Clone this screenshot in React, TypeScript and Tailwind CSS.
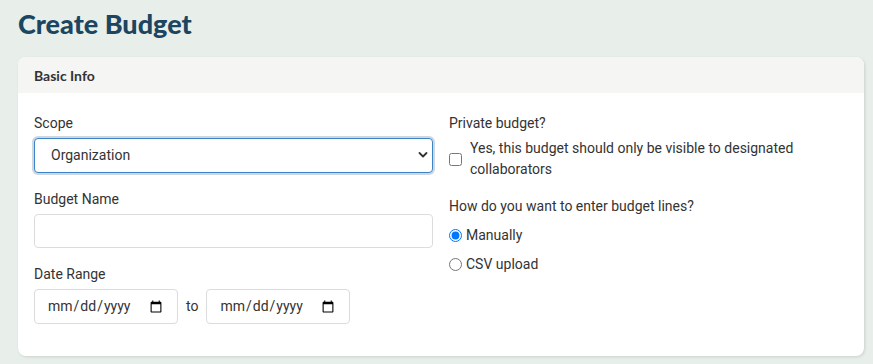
import { useState } from 'react'

export default function App() {
  const [mode, setMode] = useState('manual')

  return (
    <div className="min-h-screen bg-[#e8eeea] pl-[18px] pr-[9px] pt-[6px] pb-6 font-['Roboto',sans-serif] text-[14px] text-[#333]">
      <h1 className="mb-[16px] font-['Lato',sans-serif] text-[27px] font-black leading-[35px] text-[#1c4560]">
        Create Budget
      </h1>

      <div className="overflow-hidden rounded-lg bg-white shadow-[1px_1px_3px_rgba(0,0,0,0.12)]">
        <div className="flex h-9 items-center bg-[#f5f5f3] px-4 font-['Lato',sans-serif] text-[14px] font-bold text-[#333]">
          Basic Info
        </div>

        <div className="grid grid-cols-2 gap-4 px-4 pt-5 pb-8">
          {/* left column */}
          <div className="flex flex-col">
            <label className="mb-1 leading-[21px]">Scope</label>
            <div className="relative">
              <select
                defaultValue="org"
                className="h-[35px] w-full appearance-none rounded border border-[#3d84c6] bg-white pl-4 text-[14px] text-[#333] shadow-[0_0_0_2px_#cfd8e0] outline-none"
              >
                <option value="org">Organization</option>
                <option value="project">Project</option>
              </select>
              <svg
                className="pointer-events-none absolute right-[5px] top-[13px]"
                width="10"
                height="8"
                viewBox="0 0 10 8"
                fill="none"
              >
                <path d="M1.5 2 L5 5.5 L8.5 2" stroke="#333" strokeWidth="1.8" strokeLinecap="round" strokeLinejoin="round" />
              </svg>
            </div>

            <label className="mt-4 mb-1 leading-[21px]">Budget Name</label>
            <input
              type="text"
              className="h-[34px] w-full rounded border border-[#dcdcdc] px-3 outline-none"
            />

            <label className="mt-4 mb-1 leading-[21px]">Date Range</label>
            <div className="flex items-center">
              <input
                type="date"
                className="h-[35px] w-[144px] rounded border border-[#dcdcdc] px-3 text-[14px] text-[#333] outline-none"
              />
              <span className="mx-2">to</span>
              <input
                type="date"
                className="h-[35px] w-[144px] rounded border border-[#dcdcdc] px-3 text-[14px] text-[#333] outline-none"
              />
            </div>
          </div>

          {/* right column */}
          <div className="flex flex-col">
            <label className="mb-1 leading-[21px]">Private budget?</label>
            <label className="flex items-center gap-2">
              <input type="checkbox" className="m-0 h-[13px] w-[13px] shrink-0" />
              <span className="leading-[21px]">
                Yes, this budget should only be visible to designated collaborators
              </span>
            </label>

            <label className="mt-4 leading-[21px]">How do you want to enter budget lines?</label>
            <label className="mt-2 flex items-center gap-1 leading-[21px]">
              <input
                type="radio"
                name="mode"
                checked={mode === 'manual'}
                onChange={() => setMode('manual')}
                className="m-0 h-[13px] w-[13px]"
              />
              Manually
            </label>
            <label className="mt-2 flex items-center gap-1 leading-[21px]">
              <input
                type="radio"
                name="mode"
                checked={mode === 'csv'}
                onChange={() => setMode('csv')}
                className="m-0 h-[13px] w-[13px]"
              />
              CSV upload
            </label>
          </div>
        </div>
      </div>
    </div>
  )
}
